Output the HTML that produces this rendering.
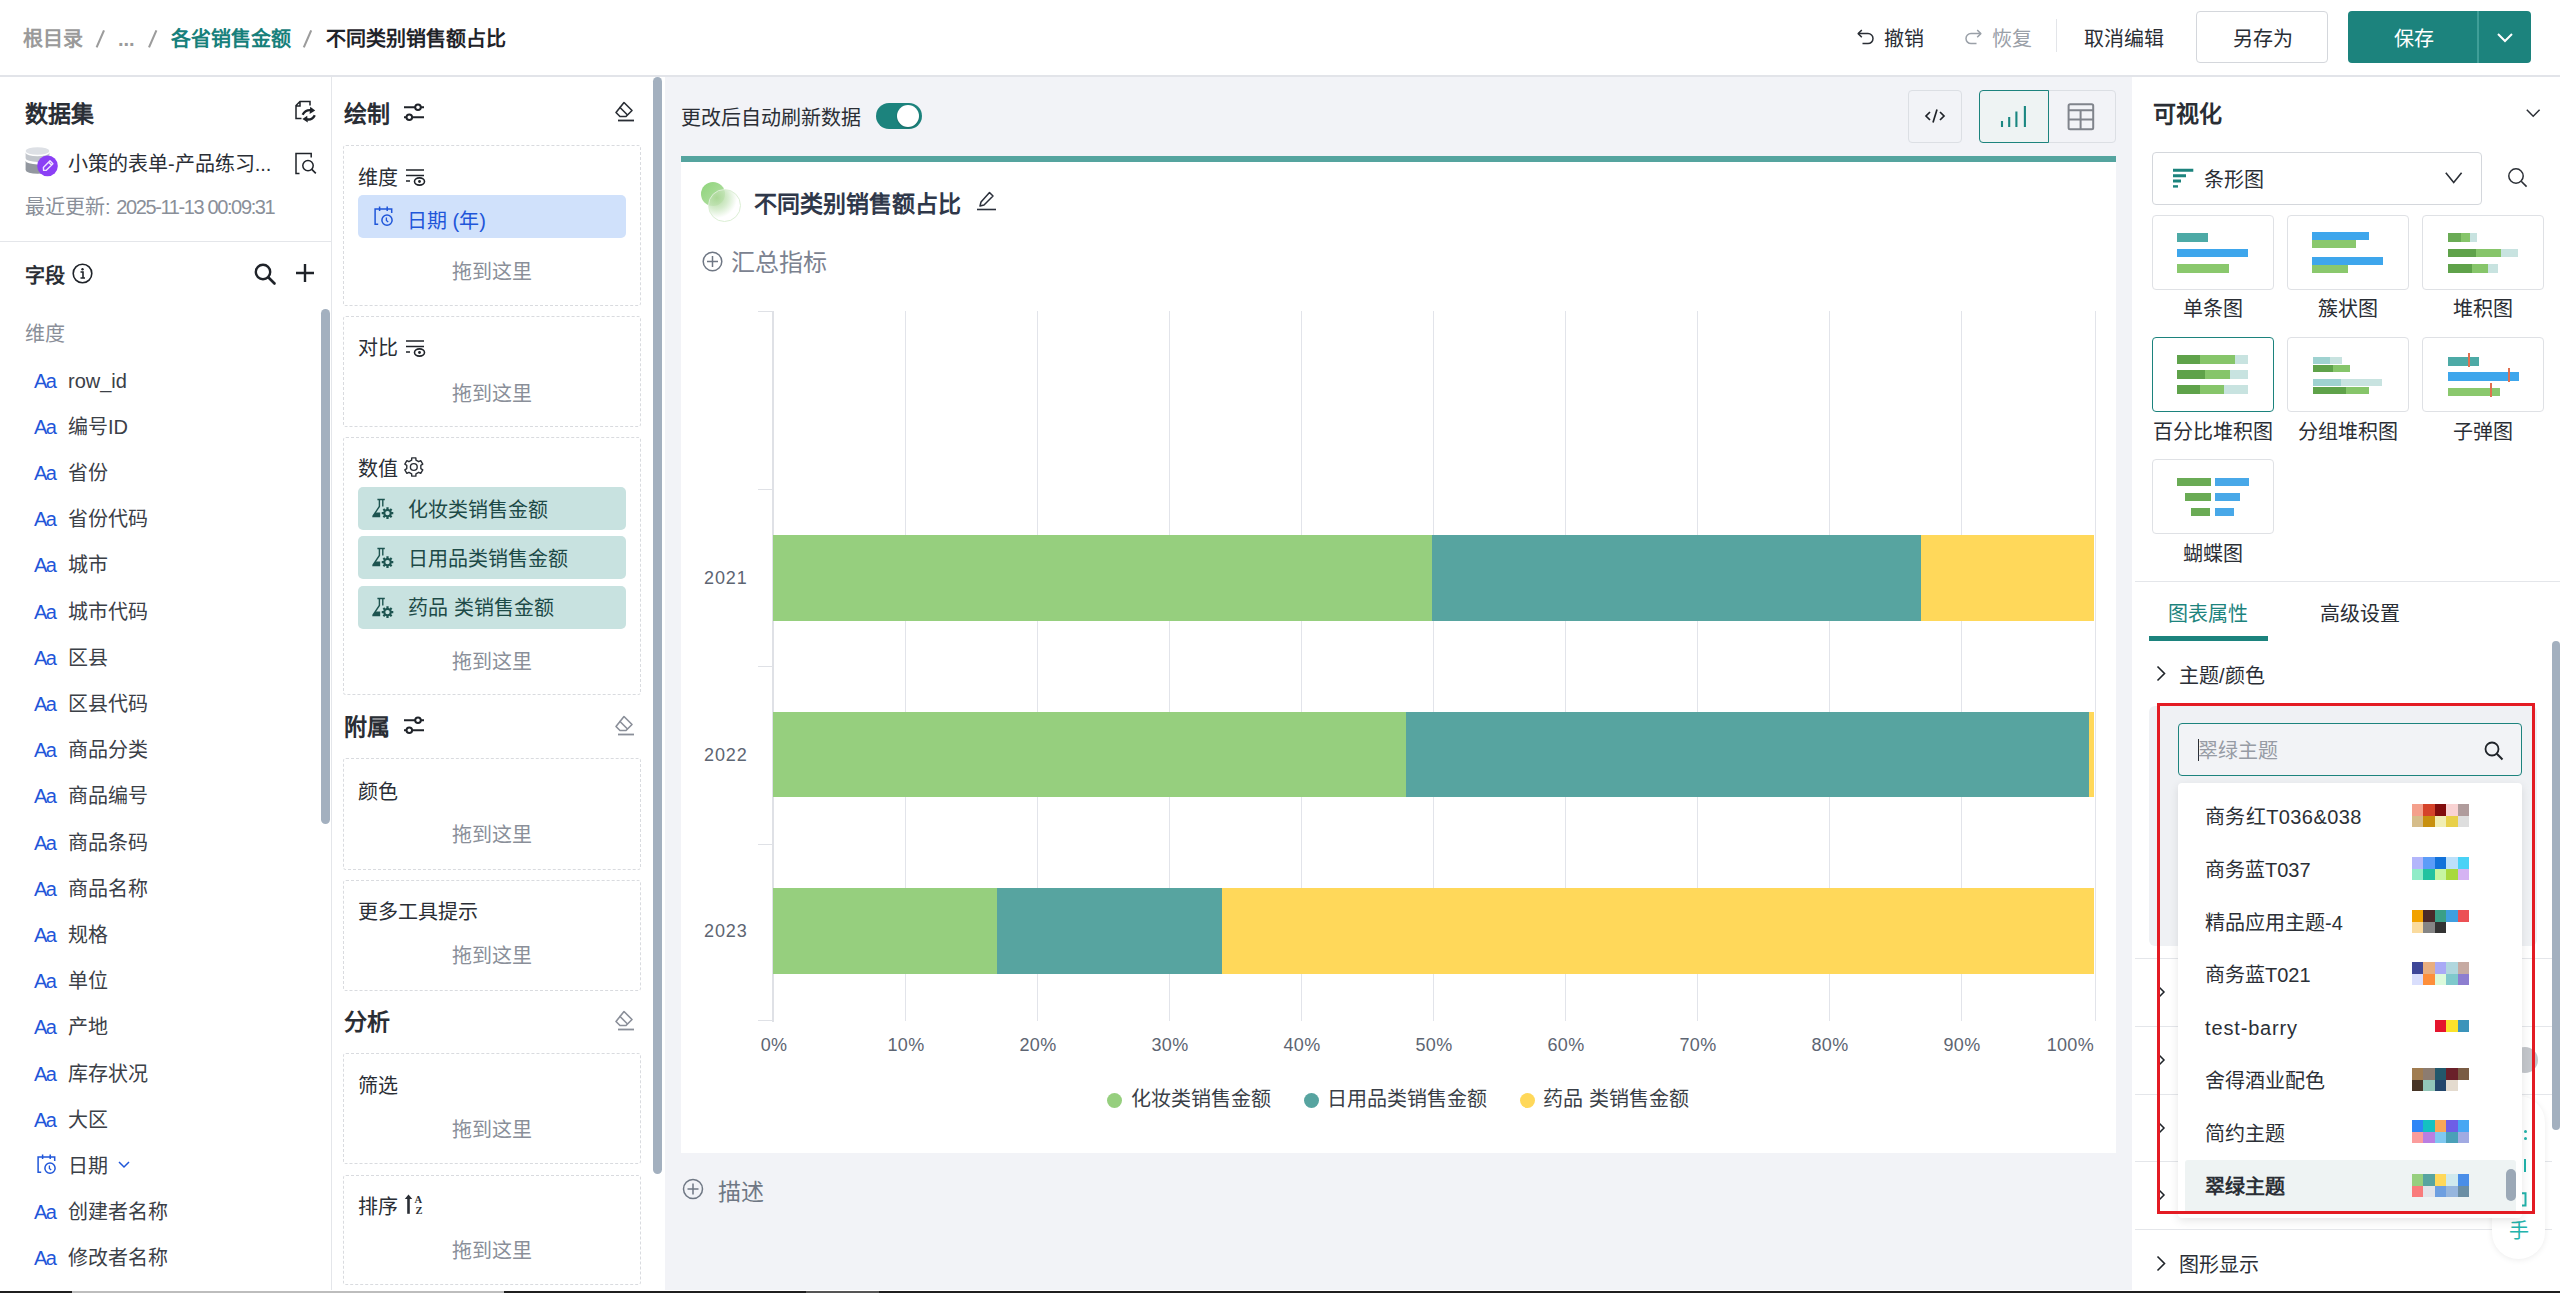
<!DOCTYPE html>
<html lang="zh-CN">
<head>
<meta charset="utf-8">
<style>
*{box-sizing:border-box;margin:0;padding:0}
html,body{width:2560px;height:1293px;overflow:hidden;background:#fff;font-family:"Liberation Sans",sans-serif;color:#1f2329}
.a{position:absolute}
.t{position:absolute;white-space:nowrap}
svg{position:absolute;overflow:visible}
.box{position:absolute;border:1px dashed #d9dbdf;border-radius:3px;background:#fff}
</style>
</head>
<body>

<div class="a" style="left:0px;top:0px;width:2560px;height:77px;background:#fff;border-bottom:2px solid #e2e4e9"></div>
<div class="t" style="left:23px;top:24.0px;font-size:20px;line-height:30.0px;color:#9a9a9a;font-weight:600;">根目录</div>
<svg style="left:80px;top:20px" width="260" height="40" viewBox="0 0 260 40"><path d="M16.6 27.3 L24 10.4 M69 27.3 L76.4 10.4 M223.8 27.3 L231.2 10.4" stroke="#9c9c9c" stroke-width="2.1"/></svg>
<div class="t" style="left:118px;top:24.0px;font-size:20px;line-height:30.0px;color:#9a9a9a;font-weight:600;">...</div>
<div class="t" style="left:171px;top:24.0px;font-size:20px;line-height:30.0px;color:#17807b;font-weight:600;">各省销售金额</div>
<div class="t" style="left:326px;top:24.0px;font-size:20px;line-height:30.0px;color:#1f2329;font-weight:600;">不同类别销售额占比</div>
<svg style="left:1857px;top:29px" width="18" height="17" viewBox="0 0 18 17"><path d="M4.8 1 L1.2 4.6 L4.8 8.2" fill="none" stroke="#2b2f36" stroke-width="1.5" stroke-linejoin="round"/><path d="M1.5 4.6 H11 a5 5 0 0 1 0 10 H5.5" fill="none" stroke="#2b2f36" stroke-width="1.5"/></svg>
<div class="t" style="left:1884px;top:24.0px;font-size:20px;line-height:30.0px;color:#2a2e35;">撤销</div>
<svg style="left:1964px;top:29px" width="18" height="17" viewBox="0 0 18 17"><path d="M13.2 1 L16.8 4.6 L13.2 8.2" fill="none" stroke="#9aa0a8" stroke-width="1.5" stroke-linejoin="round"/><path d="M16.5 4.6 H7 a5 5 0 0 0 0 10 H12.5" fill="none" stroke="#9aa0a8" stroke-width="1.5"/></svg>
<div class="t" style="left:1992px;top:24.0px;font-size:20px;line-height:30.0px;color:#9aa0a8;">恢复</div>
<div class="a" style="left:2056px;top:19px;width:1px;height:33px;background:#e3e5e9;"></div>
<div class="t" style="left:2084px;top:24.0px;font-size:20px;line-height:30.0px;color:#2a2e35;">取消编辑</div>
<div class="a" style="left:2196px;top:11px;width:132px;height:52px;background:#fff;border:1px solid #d4d7dc;border-radius:4px"></div>
<div class="t" style="left:2233px;top:24.0px;font-size:20px;line-height:30.0px;color:#2a2e35;">另存为</div>
<div class="a" style="left:2348px;top:11px;width:183px;height:52px;background:#1c837d;border-radius:4px"></div>
<div class="a" style="left:2477px;top:11px;width:2px;height:52px;background:#3f9e98;"></div>
<div class="t" style="left:2394px;top:24.0px;font-size:20px;line-height:30.0px;color:#fff;">保存</div>
<svg style="left:2497px;top:33px" width="16" height="10" viewBox="0 0 16 10"><path d="M1 1 L8 8 L15 1" fill="none" stroke="#fff" stroke-width="2"/></svg>
<div class="a" style="left:331px;top:77px;width:1px;height:1213px;background:#e4e6ea;"></div>
<div class="t" style="left:25px;top:97.4px;font-size:23px;line-height:34.5px;color:#2a2e35;font-weight:700;">数据集</div>
<svg style="left:285px;top:95px" width="40" height="85" viewBox="0 0 40 85"><path d="M25 10.5 V6.5 H15 L11 10.5 V23.5 H16.5 M15 6.5 V11 H11" fill="none" stroke="#1f2329" stroke-width="1.5"/><path d="M17.6 19.8 Q20.5 14.3 26.5 15.2" fill="none" stroke="#1f2329" stroke-width="2.3"/><path d="M25.2 11.8 L30.2 15.6 L24.6 18.9 Z" fill="#1f2329"/><path d="M29.8 20.2 Q27.2 25.6 20.8 24.2" fill="none" stroke="#1f2329" stroke-width="2.3"/><path d="M22.2 20.8 L17.4 24 L22.8 27.6 Z" fill="#1f2329"/><path d="M14.5 78.5 H11 V58.6 H26.2 V62.5" fill="none" stroke="#1f2329" stroke-width="1.5"/><circle cx="23" cy="70.6" r="5.2" fill="none" stroke="#1f2329" stroke-width="1.5"/><path d="M26.8 74.4 L30.8 78.4" stroke="#1f2329" stroke-width="1.6"/></svg>
<svg style="left:20px;top:140px" width="40" height="40" viewBox="0 0 40 40"><ellipse cx="17.5" cy="11" rx="11.9" ry="3.75" fill="#dde0e5"/><path d="M5.6 12.6 A11.9 3.75 0 0 0 29.4 12.6 V18.2 A11.9 3.75 0 0 1 5.6 18.2 Z" fill="#c2c6cc"/><path d="M5.6 20.7 A11.9 3.75 0 0 0 29.4 20.7 V30 A11.9 3.75 0 0 1 5.6 30 Z" fill="#92979f"/><circle cx="27.5" cy="25.9" r="10.3" fill="#8b3ff5"/><path d="M23.6 30.4 L23.4 27.4 L30 20.8 L32.9 23.7 L26.3 30.3 Z M28.6 22.2 L31.5 25.1" fill="none" stroke="#efe4ff" stroke-width="1.4" stroke-linejoin="round"/></svg>
<div class="t" style="left:68px;top:149.0px;font-size:20px;line-height:30.0px;color:#2a2e35;">小策的表单-产品练习...</div>
<div class="t" style="left:25px;top:192px;font-size:20px;line-height:30px;color:#8a8f99">最近更新: <span style="display:inline-block;letter-spacing:-1.37px">2025-11-13 00:09:31</span></div>
<div class="a" style="left:0px;top:241px;width:331px;height:1px;background:#e4e6ea;"></div>
<div class="t" style="left:25px;top:261.0px;font-size:20px;line-height:30.0px;color:#2a2e35;font-weight:700;">字段</div>
<svg style="left:72px;top:263px" width="21" height="21" viewBox="0 0 21 21"><circle cx="10.5" cy="10.5" r="9.3" fill="none" stroke="#1f2329" stroke-width="1.6"/><circle cx="10.5" cy="6.3" r="1.2" fill="#1f2329"/><path d="M8.5 9 H11 V15 M8.5 15 H13" fill="none" stroke="#1f2329" stroke-width="1.6"/></svg>
<svg style="left:254px;top:263px" width="22" height="22" viewBox="0 0 22 22"><circle cx="9" cy="9" r="7.2" fill="none" stroke="#1f2329" stroke-width="2.4"/><path d="M14.5 14.5 L20.5 20.5" stroke="#1f2329" stroke-width="2.6" stroke-linecap="round"/></svg>
<svg style="left:295px;top:263px" width="20" height="20" viewBox="0 0 20 20"><path d="M10 1 V19 M1 10 H19" stroke="#1f2329" stroke-width="2.4"/></svg>
<div class="t" style="left:25px;top:318.5px;font-size:20px;line-height:30.0px;color:#8a8f99;">维度</div>
<div class="a" style="left:321px;top:309px;width:9px;height:515px;background:#a3b0bf;border-radius:4.5px"></div>
<div class="t" style="left:34px;top:365.5px;font-size:20px;line-height:30.0px;color:#1f56d9;letter-spacing:-1.5px">Aa</div>
<div class="t" style="left:68px;top:365.5px;font-size:20px;line-height:30.0px;color:#3b4047;">row_id</div>
<div class="t" style="left:34px;top:411.7px;font-size:20px;line-height:30.0px;color:#1f56d9;letter-spacing:-1.5px">Aa</div>
<div class="t" style="left:68px;top:411.7px;font-size:20px;line-height:30.0px;color:#3b4047;">编号ID</div>
<div class="t" style="left:34px;top:457.9px;font-size:20px;line-height:30.0px;color:#1f56d9;letter-spacing:-1.5px">Aa</div>
<div class="t" style="left:68px;top:457.9px;font-size:20px;line-height:30.0px;color:#3b4047;">省份</div>
<div class="t" style="left:34px;top:504.1px;font-size:20px;line-height:30.0px;color:#1f56d9;letter-spacing:-1.5px">Aa</div>
<div class="t" style="left:68px;top:504.1px;font-size:20px;line-height:30.0px;color:#3b4047;">省份代码</div>
<div class="t" style="left:34px;top:550.3px;font-size:20px;line-height:30.0px;color:#1f56d9;letter-spacing:-1.5px">Aa</div>
<div class="t" style="left:68px;top:550.3px;font-size:20px;line-height:30.0px;color:#3b4047;">城市</div>
<div class="t" style="left:34px;top:596.5px;font-size:20px;line-height:30.0px;color:#1f56d9;letter-spacing:-1.5px">Aa</div>
<div class="t" style="left:68px;top:596.5px;font-size:20px;line-height:30.0px;color:#3b4047;">城市代码</div>
<div class="t" style="left:34px;top:642.7px;font-size:20px;line-height:30.0px;color:#1f56d9;letter-spacing:-1.5px">Aa</div>
<div class="t" style="left:68px;top:642.7px;font-size:20px;line-height:30.0px;color:#3b4047;">区县</div>
<div class="t" style="left:34px;top:688.9px;font-size:20px;line-height:30.0px;color:#1f56d9;letter-spacing:-1.5px">Aa</div>
<div class="t" style="left:68px;top:688.9px;font-size:20px;line-height:30.0px;color:#3b4047;">区县代码</div>
<div class="t" style="left:34px;top:735.1px;font-size:20px;line-height:30.0px;color:#1f56d9;letter-spacing:-1.5px">Aa</div>
<div class="t" style="left:68px;top:735.1px;font-size:20px;line-height:30.0px;color:#3b4047;">商品分类</div>
<div class="t" style="left:34px;top:781.3px;font-size:20px;line-height:30.0px;color:#1f56d9;letter-spacing:-1.5px">Aa</div>
<div class="t" style="left:68px;top:781.3px;font-size:20px;line-height:30.0px;color:#3b4047;">商品编号</div>
<div class="t" style="left:34px;top:827.5px;font-size:20px;line-height:30.0px;color:#1f56d9;letter-spacing:-1.5px">Aa</div>
<div class="t" style="left:68px;top:827.5px;font-size:20px;line-height:30.0px;color:#3b4047;">商品条码</div>
<div class="t" style="left:34px;top:873.7px;font-size:20px;line-height:30.0px;color:#1f56d9;letter-spacing:-1.5px">Aa</div>
<div class="t" style="left:68px;top:873.7px;font-size:20px;line-height:30.0px;color:#3b4047;">商品名称</div>
<div class="t" style="left:34px;top:919.9px;font-size:20px;line-height:30.0px;color:#1f56d9;letter-spacing:-1.5px">Aa</div>
<div class="t" style="left:68px;top:919.9px;font-size:20px;line-height:30.0px;color:#3b4047;">规格</div>
<div class="t" style="left:34px;top:966.1px;font-size:20px;line-height:30.0px;color:#1f56d9;letter-spacing:-1.5px">Aa</div>
<div class="t" style="left:68px;top:966.1px;font-size:20px;line-height:30.0px;color:#3b4047;">单位</div>
<div class="t" style="left:34px;top:1012.3px;font-size:20px;line-height:30.0px;color:#1f56d9;letter-spacing:-1.5px">Aa</div>
<div class="t" style="left:68px;top:1012.3px;font-size:20px;line-height:30.0px;color:#3b4047;">产地</div>
<div class="t" style="left:34px;top:1058.5px;font-size:20px;line-height:30.0px;color:#1f56d9;letter-spacing:-1.5px">Aa</div>
<div class="t" style="left:68px;top:1058.5px;font-size:20px;line-height:30.0px;color:#3b4047;">库存状况</div>
<div class="t" style="left:34px;top:1104.7px;font-size:20px;line-height:30.0px;color:#1f56d9;letter-spacing:-1.5px">Aa</div>
<div class="t" style="left:68px;top:1104.7px;font-size:20px;line-height:30.0px;color:#3b4047;">大区</div>
<svg style="left:37px;top:1154px" width="20" height="20" viewBox="0 0 20 20"><path d="M5.6 0.6 V5 M13.2 0.6 V5" stroke="#1f56d9" stroke-width="1.5"/><path d="M4.2 18.2 H1.1 V3.1 H17.7 V7" fill="none" stroke="#1f56d9" stroke-width="1.5"/><circle cx="13" cy="14.2" r="5.1" fill="none" stroke="#1f56d9" stroke-width="1.5"/><path d="M12.4 11.6 V14.5 L14.2 16" fill="none" stroke="#1f56d9" stroke-width="1.3"/></svg>
<div class="t" style="left:68px;top:1150.9px;font-size:20px;line-height:30.0px;color:#3b4047;">日期</div>
<svg style="left:118px;top:1161px" width="12" height="7" viewBox="0 0 12 7"><path d="M1 1 L6 6 L11 1" fill="none" stroke="#1f56d9" stroke-width="1.5"/></svg>
<div class="t" style="left:34px;top:1197.1px;font-size:20px;line-height:30.0px;color:#1f56d9;letter-spacing:-1.5px">Aa</div>
<div class="t" style="left:68px;top:1197.1px;font-size:20px;line-height:30.0px;color:#3b4047;">创建者名称</div>
<div class="t" style="left:34px;top:1243.3px;font-size:20px;line-height:30.0px;color:#1f56d9;letter-spacing:-1.5px">Aa</div>
<div class="t" style="left:68px;top:1243.3px;font-size:20px;line-height:30.0px;color:#3b4047;">修改者名称</div>
<div class="a" style="left:653px;top:77px;width:9px;height:1097px;background:#a3b0bf;border-radius:4.5px"></div>
<div class="t" style="left:344px;top:96.9px;font-size:23px;line-height:34.5px;color:#2a2e35;font-weight:700;">绘制</div>
<svg style="left:403px;top:104px" width="22" height="17" viewBox="0 0 22 17"><path d="M1 3.2 H12 M18 3.2 H21 M1 13.2 H3 M9.5 13.2 H21" stroke="#1f2329" stroke-width="2"/><circle cx="15" cy="3.2" r="2.8" fill="none" stroke="#1f2329" stroke-width="2"/><circle cx="6.3" cy="13.2" r="2.8" fill="none" stroke="#1f2329" stroke-width="2"/></svg>
<svg style="left:614px;top:101px" width="21" height="21" viewBox="0 0 21 21"><path d="M10 1.5 L18 9.5 L12 15.5 H6 L2 11.5 Z" fill="none" stroke="#2a2e35" stroke-width="1.6" stroke-linejoin="round"/><path d="M5.5 6 L13.5 14" stroke="#2a2e35" stroke-width="1.6"/><path d="M4 19.5 H20" stroke="#2a2e35" stroke-width="1.8"/></svg>
<div class="box" style="left:343px;top:145px;width:298px;height:161px"></div>
<div class="t" style="left:358px;top:162.5px;font-size:20px;line-height:30.0px;color:#2a2e35;">维度</div>
<svg style="left:405px;top:168px" width="19" height="18" viewBox="0 0 19 18"><path d="M1 2 H19 M1 7.5 H19 M1 13 H4 M1 13 H5" stroke="#1f2329" stroke-width="1.6"/><ellipse cx="14.5" cy="13.5" rx="5" ry="3.6" fill="none" stroke="#1f2329" stroke-width="1.6"/><circle cx="14.5" cy="13.5" r="1.4" fill="#1f2329"/></svg>
<div class="a" style="left:358px;top:195px;width:268px;height:43px;background:#d0e1fb;border-radius:5px"></div>
<svg style="left:374px;top:206px" width="20" height="20" viewBox="0 0 20 20"><path d="M5.6 0.6 V5 M13.2 0.6 V5" stroke="#1f56d9" stroke-width="1.5"/><path d="M4.2 18.2 H1.1 V3.1 H17.7 V7" fill="none" stroke="#1f56d9" stroke-width="1.5"/><circle cx="13" cy="14.2" r="5.1" fill="none" stroke="#1f56d9" stroke-width="1.5"/><path d="M12.4 11.6 V14.5 L14.2 16" fill="none" stroke="#1f56d9" stroke-width="1.3"/></svg>
<div class="t" style="left:407px;top:205.5px;font-size:20px;line-height:30.0px;color:#1f56d9;">日期 (年)</div>
<div class="t" style="left:292px;width:400px;text-align:center;top:256.5px;font-size:20px;line-height:30.0px;color:#8a8f99;">拖到这里</div>
<div class="box" style="left:343px;top:316px;width:298px;height:111px"></div>
<div class="t" style="left:358px;top:333.0px;font-size:20px;line-height:30.0px;color:#2a2e35;">对比</div>
<svg style="left:405px;top:339px" width="19" height="18" viewBox="0 0 19 18"><path d="M1 2 H19 M1 7.5 H19 M1 13 H4 M1 13 H5" stroke="#1f2329" stroke-width="1.6"/><ellipse cx="14.5" cy="13.5" rx="5" ry="3.6" fill="none" stroke="#1f2329" stroke-width="1.6"/><circle cx="14.5" cy="13.5" r="1.4" fill="#1f2329"/></svg>
<div class="t" style="left:292px;width:400px;text-align:center;top:378.5px;font-size:20px;line-height:30.0px;color:#8a8f99;">拖到这里</div>
<div class="box" style="left:343px;top:437px;width:298px;height:258px"></div>
<div class="t" style="left:358px;top:454.0px;font-size:20px;line-height:30.0px;color:#2a2e35;">数值</div>
<svg style="left:400px;top:452px" width="30" height="30" viewBox="0 0 30 30"><path d="M11.65 8.13 L11.75 5.83 L15.85 5.83 L15.95 8.13 L18.67 9.70 L20.72 8.64 L22.77 12.19 L20.83 13.43 L20.83 16.57 L22.77 17.81 L20.72 21.36 L18.67 20.30 L15.95 21.87 L15.85 24.17 L11.75 24.17 L11.65 21.87 L8.93 20.30 L6.88 21.36 L4.83 17.81 L6.77 16.57 L6.77 13.43 L4.83 12.19 L6.88 8.64 L8.93 9.70 Z" fill="none" stroke="#2b2f36" stroke-width="1.4" stroke-linejoin="round"/><circle cx="13.8" cy="15" r="3.4" fill="none" stroke="#2b2f36" stroke-width="1.4"/></svg>
<div class="a" style="left:358px;top:487px;width:268px;height:43px;background:#c8e2e0;border-radius:5px"></div>
<svg style="left:370px;top:497px" width="25" height="25" viewBox="0 0 25 25"><path d="M7.4 2.5 H14.8 M12.8 2.5 V9.5" fill="none" stroke="#1d5450" stroke-width="1.4"/><path d="M9.4 2.5 V9.5 L2.6 19.6" fill="none" stroke="#1d5450" stroke-width="1.4"/><path d="M5.2 15.5 L2.2 20.2 H10.2 V15.5 Z" fill="#1d5450"/><path fill-rule="evenodd" d="M16.40 11.94 L16.35 10.31 L18.65 10.31 L18.60 11.94 L19.66 12.38 L20.78 11.19 L22.41 12.82 L21.22 13.94 L21.66 15.00 L23.29 14.95 L23.29 17.25 L21.66 17.20 L21.22 18.26 L22.41 19.38 L20.78 21.01 L19.66 19.82 L18.60 20.26 L18.65 21.89 L16.35 21.89 L16.40 20.26 L15.34 19.82 L14.22 21.01 L12.59 19.38 L13.78 18.26 L13.34 17.20 L11.71 17.25 L11.71 14.95 L13.34 15.00 L13.78 13.94 L12.59 12.82 L14.22 11.19 L15.34 12.38 Z M19.7 16.1 A2.2 2.2 0 1 0 15.3 16.1 A2.2 2.2 0 1 0 19.7 16.1 Z" fill="#1d5450"/></svg>
<div class="t" style="left:408px;top:494.5px;font-size:20px;line-height:30.0px;color:#1d4a47;">化妆类销售金额</div>
<div class="a" style="left:358px;top:536px;width:268px;height:43px;background:#c8e2e0;border-radius:5px"></div>
<svg style="left:370px;top:546px" width="25" height="25" viewBox="0 0 25 25"><path d="M7.4 2.5 H14.8 M12.8 2.5 V9.5" fill="none" stroke="#1d5450" stroke-width="1.4"/><path d="M9.4 2.5 V9.5 L2.6 19.6" fill="none" stroke="#1d5450" stroke-width="1.4"/><path d="M5.2 15.5 L2.2 20.2 H10.2 V15.5 Z" fill="#1d5450"/><path fill-rule="evenodd" d="M16.40 11.94 L16.35 10.31 L18.65 10.31 L18.60 11.94 L19.66 12.38 L20.78 11.19 L22.41 12.82 L21.22 13.94 L21.66 15.00 L23.29 14.95 L23.29 17.25 L21.66 17.20 L21.22 18.26 L22.41 19.38 L20.78 21.01 L19.66 19.82 L18.60 20.26 L18.65 21.89 L16.35 21.89 L16.40 20.26 L15.34 19.82 L14.22 21.01 L12.59 19.38 L13.78 18.26 L13.34 17.20 L11.71 17.25 L11.71 14.95 L13.34 15.00 L13.78 13.94 L12.59 12.82 L14.22 11.19 L15.34 12.38 Z M19.7 16.1 A2.2 2.2 0 1 0 15.3 16.1 A2.2 2.2 0 1 0 19.7 16.1 Z" fill="#1d5450"/></svg>
<div class="t" style="left:408px;top:543.5px;font-size:20px;line-height:30.0px;color:#1d4a47;">日用品类销售金额</div>
<div class="a" style="left:358px;top:585.5px;width:268px;height:43px;background:#c8e2e0;border-radius:5px"></div>
<svg style="left:370px;top:595.5px" width="25" height="25" viewBox="0 0 25 25"><path d="M7.4 2.5 H14.8 M12.8 2.5 V9.5" fill="none" stroke="#1d5450" stroke-width="1.4"/><path d="M9.4 2.5 V9.5 L2.6 19.6" fill="none" stroke="#1d5450" stroke-width="1.4"/><path d="M5.2 15.5 L2.2 20.2 H10.2 V15.5 Z" fill="#1d5450"/><path fill-rule="evenodd" d="M16.40 11.94 L16.35 10.31 L18.65 10.31 L18.60 11.94 L19.66 12.38 L20.78 11.19 L22.41 12.82 L21.22 13.94 L21.66 15.00 L23.29 14.95 L23.29 17.25 L21.66 17.20 L21.22 18.26 L22.41 19.38 L20.78 21.01 L19.66 19.82 L18.60 20.26 L18.65 21.89 L16.35 21.89 L16.40 20.26 L15.34 19.82 L14.22 21.01 L12.59 19.38 L13.78 18.26 L13.34 17.20 L11.71 17.25 L11.71 14.95 L13.34 15.00 L13.78 13.94 L12.59 12.82 L14.22 11.19 L15.34 12.38 Z M19.7 16.1 A2.2 2.2 0 1 0 15.3 16.1 A2.2 2.2 0 1 0 19.7 16.1 Z" fill="#1d5450"/></svg>
<div class="t" style="left:408px;top:593.0px;font-size:20px;line-height:30.0px;color:#1d4a47;">药品 类销售金额</div>
<div class="t" style="left:292px;width:400px;text-align:center;top:646.5px;font-size:20px;line-height:30.0px;color:#8a8f99;">拖到这里</div>
<div class="t" style="left:344px;top:709.7px;font-size:23px;line-height:34.5px;color:#2a2e35;font-weight:700;">附属</div>
<svg style="left:403px;top:717px" width="22" height="17" viewBox="0 0 22 17"><path d="M1 3.2 H12 M18 3.2 H21 M1 13.2 H3 M9.5 13.2 H21" stroke="#1f2329" stroke-width="2"/><circle cx="15" cy="3.2" r="2.8" fill="none" stroke="#1f2329" stroke-width="2"/><circle cx="6.3" cy="13.2" r="2.8" fill="none" stroke="#1f2329" stroke-width="2"/></svg>
<svg style="left:614px;top:714.6px" width="21" height="21" viewBox="0 0 21 21"><path d="M10 1.5 L18 9.5 L12 15.5 H6 L2 11.5 Z" fill="none" stroke="#8a8f99" stroke-width="1.6" stroke-linejoin="round"/><path d="M5.5 6 L13.5 14" stroke="#8a8f99" stroke-width="1.6"/><path d="M4 19.5 H20" stroke="#8a8f99" stroke-width="1.8"/></svg>
<div class="box" style="left:343px;top:758px;width:298px;height:112px"></div>
<div class="t" style="left:358px;top:776.5px;font-size:20px;line-height:30.0px;color:#2a2e35;">颜色</div>
<div class="t" style="left:292px;width:400px;text-align:center;top:820.0px;font-size:20px;line-height:30.0px;color:#8a8f99;">拖到这里</div>
<div class="box" style="left:343px;top:880px;width:298px;height:111px"></div>
<div class="t" style="left:358px;top:897.0px;font-size:20px;line-height:30.0px;color:#2a2e35;">更多工具提示</div>
<div class="t" style="left:292px;width:400px;text-align:center;top:941.0px;font-size:20px;line-height:30.0px;color:#8a8f99;">拖到这里</div>
<div class="t" style="left:344px;top:1005.4px;font-size:23px;line-height:34.5px;color:#2a2e35;font-weight:700;">分析</div>
<svg style="left:614px;top:1009.6px" width="21" height="21" viewBox="0 0 21 21"><path d="M10 1.5 L18 9.5 L12 15.5 H6 L2 11.5 Z" fill="none" stroke="#8a8f99" stroke-width="1.6" stroke-linejoin="round"/><path d="M5.5 6 L13.5 14" stroke="#8a8f99" stroke-width="1.6"/><path d="M4 19.5 H20" stroke="#8a8f99" stroke-width="1.8"/></svg>
<div class="box" style="left:343px;top:1053px;width:298px;height:111px"></div>
<div class="t" style="left:358px;top:1070.5px;font-size:20px;line-height:30.0px;color:#2a2e35;">筛选</div>
<div class="t" style="left:292px;width:400px;text-align:center;top:1114.5px;font-size:20px;line-height:30.0px;color:#8a8f99;">拖到这里</div>
<div class="box" style="left:343px;top:1175px;width:298px;height:110px"></div>
<div class="t" style="left:358px;top:1191.5px;font-size:20px;line-height:30.0px;color:#2a2e35;">排序</div>
<svg style="left:400px;top:1190px" width="30" height="30" viewBox="0 0 30 30"><path d="M8.5 7.5 V23.8" stroke="#2a2e35" stroke-width="2.6"/><path d="M4.8 9 L8.5 4.6 L12.3 9 Z" fill="#2a2e35"/><text x="14.6" y="12.9" font-size="10.5" font-weight="bold" font-family="Liberation Serif" fill="#2a2e35">A</text><text x="15.4" y="23.9" font-size="10.5" font-weight="bold" font-family="Liberation Serif" fill="#2a2e35">Z</text></svg>
<div class="t" style="left:292px;width:400px;text-align:center;top:1236.0px;font-size:20px;line-height:30.0px;color:#8a8f99;">拖到这里</div>
<div class="a" style="left:665px;top:77px;width:1467px;height:1213px;background:#f2f3f7;"></div>
<div class="t" style="left:681px;top:102.5px;font-size:20px;line-height:30.0px;color:#2a2e35;">更改后自动刷新数据</div>
<div class="a" style="left:876px;top:103px;width:46px;height:26px;background:#1c837d;border-radius:13px"></div>
<div class="a" style="left:897px;top:105px;width:22px;height:22px;border-radius:11px;background:#fff;box-shadow:0 1px 2px rgba(0,0,0,.2)"></div>
<div class="a" style="left:1908px;top:90px;width:54px;height:53px;background:#f2f3f7;border:1px solid #dcdfe4;border-radius:4px"></div>
<svg style="left:1925px;top:107px" width="20" height="18" viewBox="0 0 20 18"><path d="M5 5 L1 9 L5 13 M15 5 L19 9 L15 13 M12 2.5 L8 15.5" fill="none" stroke="#1f2329" stroke-width="1.7"/></svg>
<div class="a" style="left:1979px;top:90px;width:137px;height:53px;background:#f2f3f7;border:1px solid #dcdfe4;border-radius:4px"></div>
<div class="a" style="left:1979px;top:90px;width:70px;height:53px;background:#eef3f3;border:1.5px solid #1c837d;border-radius:4px 0 0 4px"></div>
<svg style="left:1995px;top:100px" width="36" height="30" viewBox="0 0 36 30"><path d="M7 27 V21 M14.2 27 V17 M21.4 27 V11.5 M29.9 27 V6" stroke="#1a8781" stroke-width="2.1"/></svg>
<svg style="left:2067px;top:103px" width="28" height="28" viewBox="0 0 28 28"><rect x="1.6" y="1.2" width="24.6" height="25" rx="1.5" fill="none" stroke="#80848c" stroke-width="2"/><path d="M1.6 7.2 H26.2 M1.6 16.6 H26.2 M13.6 7.2 V26.2" stroke="#80848c" stroke-width="2"/></svg>
<div class="a" style="left:681px;top:156px;width:1435px;height:6px;background:#55a49f;"></div>
<div class="a" style="left:681px;top:162px;width:1435px;height:991px;background:#fff;"></div>
<div class="a" style="left:701px;top:182px;width:24px;height:24px;border-radius:50%;background:linear-gradient(135deg,#8ed47a,#b9e0ab)"></div>
<div class="a" style="left:707.5px;top:188.5px;width:33px;height:33px;border-radius:50%;background:radial-gradient(circle at 25% 25%,rgba(170,215,150,0.95),rgba(205,232,195,0.8) 35%,rgba(255,255,255,0.97) 62%);border:1.2px solid #dcefd5"></div>
<div class="t" style="left:754px;top:187.4px;font-size:23px;line-height:34.5px;color:#2f384a;font-weight:700;">不同类别销售额占比</div>
<svg style="left:976px;top:191px" width="22" height="20" viewBox="0 0 22 20"><path d="M13.5 1.5 L17 5 L8 14 L4 15 L5 11 Z" fill="none" stroke="#2b303b" stroke-width="1.5" stroke-linejoin="round"/><path d="M1 18.5 H20" stroke="#2b303b" stroke-width="1.6"/></svg>
<svg style="left:702px;top:251px" width="21" height="21" viewBox="0 0 21 21"><circle cx="10.5" cy="10.5" r="9.3" fill="none" stroke="#6f7784" stroke-width="1.5"/><path d="M10.5 5 V16 M5 10.5 H16" stroke="#6f7784" stroke-width="1.5"/></svg>
<div class="t" style="left:731px;top:245.2px;font-size:24px;line-height:36.0px;color:#7b8290;">汇总指标</div>
<div class="a" style="left:905px;top:311px;width:1px;height:710px;background:#e2e4ea;"></div>
<div class="a" style="left:1037px;top:311px;width:1px;height:710px;background:#e2e4ea;"></div>
<div class="a" style="left:1169px;top:311px;width:1px;height:710px;background:#e2e4ea;"></div>
<div class="a" style="left:1301px;top:311px;width:1px;height:710px;background:#e2e4ea;"></div>
<div class="a" style="left:1433px;top:311px;width:1px;height:710px;background:#e2e4ea;"></div>
<div class="a" style="left:1565px;top:311px;width:1px;height:710px;background:#e2e4ea;"></div>
<div class="a" style="left:1697px;top:311px;width:1px;height:710px;background:#e2e4ea;"></div>
<div class="a" style="left:1829px;top:311px;width:1px;height:710px;background:#e2e4ea;"></div>
<div class="a" style="left:1961px;top:311px;width:1px;height:710px;background:#e2e4ea;"></div>
<div class="a" style="left:2095px;top:311px;width:1px;height:710px;background:#e2e4ea;"></div>
<div class="a" style="left:772px;top:311px;width:2px;height:711px;background:#dfe1e6;"></div>
<div class="a" style="left:758px;top:311px;width:15px;height:1px;background:#dfe1e6;"></div>
<div class="a" style="left:758px;top:489px;width:15px;height:1px;background:#dfe1e6;"></div>
<div class="a" style="left:758px;top:666px;width:15px;height:1px;background:#dfe1e6;"></div>
<div class="a" style="left:758px;top:844px;width:15px;height:1px;background:#dfe1e6;"></div>
<div class="a" style="left:758px;top:1020px;width:15px;height:1px;background:#dfe1e6;"></div>
<div class="a" style="left:773.0px;top:535px;width:659.2px;height:85.7px;background:#96cf7e;"></div>
<div class="a" style="left:1432.2px;top:535px;width:488.6px;height:85.7px;background:#57a4a0;"></div>
<div class="a" style="left:1920.8px;top:535px;width:173.7px;height:85.7px;background:#ffd85a;"></div>
<div class="a" style="left:773.0px;top:711.5px;width:633.0px;height:85.7px;background:#96cf7e;"></div>
<div class="a" style="left:1406.0px;top:711.5px;width:682.9px;height:85.7px;background:#57a4a0;"></div>
<div class="a" style="left:2088.9px;top:711.5px;width:5.6px;height:85.7px;background:#ffd85a;"></div>
<div class="a" style="left:773.0px;top:888px;width:223.7px;height:85.7px;background:#96cf7e;"></div>
<div class="a" style="left:996.7px;top:888px;width:225.7px;height:85.7px;background:#57a4a0;"></div>
<div class="a" style="left:1222.4px;top:888px;width:872.1px;height:85.7px;background:#ffd85a;"></div>
<div class="t" style="left:704px;top:565.4px;font-size:18px;line-height:27.0px;color:#5d6572;letter-spacing:0.9px">2021</div>
<div class="t" style="left:704px;top:741.9px;font-size:18px;line-height:27.0px;color:#5d6572;letter-spacing:0.9px">2022</div>
<div class="t" style="left:704px;top:918.4px;font-size:18px;line-height:27.0px;color:#5d6572;letter-spacing:0.9px">2023</div>
<div class="t" style="left:574px;width:400px;text-align:center;top:1031.9px;font-size:18px;line-height:27.0px;color:#5d6572;letter-spacing:0.3px">0%</div>
<div class="t" style="left:706px;width:400px;text-align:center;top:1031.9px;font-size:18px;line-height:27.0px;color:#5d6572;letter-spacing:0.3px">10%</div>
<div class="t" style="left:838px;width:400px;text-align:center;top:1031.9px;font-size:18px;line-height:27.0px;color:#5d6572;letter-spacing:0.3px">20%</div>
<div class="t" style="left:970px;width:400px;text-align:center;top:1031.9px;font-size:18px;line-height:27.0px;color:#5d6572;letter-spacing:0.3px">30%</div>
<div class="t" style="left:1102px;width:400px;text-align:center;top:1031.9px;font-size:18px;line-height:27.0px;color:#5d6572;letter-spacing:0.3px">40%</div>
<div class="t" style="left:1234px;width:400px;text-align:center;top:1031.9px;font-size:18px;line-height:27.0px;color:#5d6572;letter-spacing:0.3px">50%</div>
<div class="t" style="left:1366px;width:400px;text-align:center;top:1031.9px;font-size:18px;line-height:27.0px;color:#5d6572;letter-spacing:0.3px">60%</div>
<div class="t" style="left:1498px;width:400px;text-align:center;top:1031.9px;font-size:18px;line-height:27.0px;color:#5d6572;letter-spacing:0.3px">70%</div>
<div class="t" style="left:1630px;width:400px;text-align:center;top:1031.9px;font-size:18px;line-height:27.0px;color:#5d6572;letter-spacing:0.3px">80%</div>
<div class="t" style="left:1762px;width:400px;text-align:center;top:1031.9px;font-size:18px;line-height:27.0px;color:#5d6572;letter-spacing:0.3px">90%</div>
<div class="t" style="left:1894px;width:200px;text-align:right;top:1031.9px;font-size:18px;line-height:27px;color:#5d6572;letter-spacing:0.3px">100%</div>
<div class="a" style="left:1107px;top:1092.5px;width:15px;height:15px;border-radius:50%;background:#96cf7e"></div>
<div class="t" style="left:1131px;top:1084.3px;font-size:20px;line-height:30.0px;color:#3a3f47;">化妆类销售金额</div>
<div class="a" style="left:1304px;top:1092.5px;width:15px;height:15px;border-radius:50%;background:#57a4a0"></div>
<div class="t" style="left:1327px;top:1084.3px;font-size:20px;line-height:30.0px;color:#3a3f47;">日用品类销售金额</div>
<div class="a" style="left:1520px;top:1092.5px;width:15px;height:15px;border-radius:50%;background:#ffd85a"></div>
<div class="t" style="left:1543px;top:1084.3px;font-size:20px;line-height:30.0px;color:#3a3f47;">药品 类销售金额</div>
<svg style="left:682px;top:1178px" width="22" height="22" viewBox="0 0 22 22"><circle cx="11" cy="11" r="9.5" fill="none" stroke="#6f7784" stroke-width="1.5"/><path d="M11 5.5 V16.5 M5.5 11 H16.5" stroke="#6f7784" stroke-width="1.5"/></svg>
<div class="t" style="left:718px;top:1174.9px;font-size:23px;line-height:34.5px;color:#6f7784;">描述</div>
<div class="a" style="left:2132px;top:77px;width:428px;height:1213px;background:#fff;"></div>
<div class="t" style="left:2153px;top:96.9px;font-size:23px;line-height:34.5px;color:#2a2e35;font-weight:700;">可视化</div>
<svg style="left:2526px;top:108.5px" width="15" height="9" viewBox="0 0 15 9"><path d="M0.8 0.8 L7.2 7.2 L13.6 0.8" fill="none" stroke="#2b2f36" stroke-width="1.5"/></svg>
<div class="a" style="left:2152px;top:152px;width:330px;height:53px;background:#fff;border:1px solid #d4d7dc;border-radius:4px"></div>
<svg style="left:2172px;top:168px" width="22" height="22" viewBox="0 0 22 22"><path d="M1 2.3 H21.3 M1 7.8 H14 M1 13 H9" stroke="#1c837d" stroke-width="3"/><path d="M1 18.4 H6" stroke="#1c837d" stroke-width="2.4"/></svg>
<div class="t" style="left:2204px;top:164.5px;font-size:20px;line-height:30.0px;color:#2a2e35;">条形图</div>
<svg style="left:2445px;top:172px" width="18" height="12" viewBox="0 0 18 12"><path d="M0.8 0.8 L8.7 10.5 L16.6 0.8" fill="none" stroke="#2b2f36" stroke-width="1.6"/></svg>
<svg style="left:2507px;top:167px" width="22" height="22" viewBox="0 0 22 22"><circle cx="9" cy="9" r="7.2" fill="none" stroke="#2b2f36" stroke-width="1.5"/><path d="M14.2 14.2 L19.6 19.6" stroke="#2b2f36" stroke-width="1.6"/></svg>
<div class="a" style="left:2152px;top:215px;width:122px;height:75px;background:#fff;border:1px solid #dfe1e5;border-radius:4px"></div>
<div class="t" style="left:2013px;width:400px;text-align:center;top:294.0px;font-size:20px;line-height:30.0px;color:#2a2e35;">单条图</div>
<div class="a" style="left:2287px;top:215px;width:122px;height:75px;background:#fff;border:1px solid #dfe1e5;border-radius:4px"></div>
<div class="t" style="left:2148px;width:400px;text-align:center;top:294.0px;font-size:20px;line-height:30.0px;color:#2a2e35;">簇状图</div>
<div class="a" style="left:2422px;top:215px;width:122px;height:75px;background:#fff;border:1px solid #dfe1e5;border-radius:4px"></div>
<div class="t" style="left:2283px;width:400px;text-align:center;top:294.0px;font-size:20px;line-height:30.0px;color:#2a2e35;">堆积图</div>
<div class="a" style="left:2152px;top:337px;width:122px;height:75px;background:#fff;border:1.5px solid #1c837d;border-radius:4px"></div>
<div class="t" style="left:2013px;width:400px;text-align:center;top:416.5px;font-size:20px;line-height:30.0px;color:#2a2e35;">百分比堆积图</div>
<div class="a" style="left:2287px;top:337px;width:122px;height:75px;background:#fff;border:1px solid #dfe1e5;border-radius:4px"></div>
<div class="t" style="left:2148px;width:400px;text-align:center;top:416.5px;font-size:20px;line-height:30.0px;color:#2a2e35;">分组堆积图</div>
<div class="a" style="left:2422px;top:337px;width:122px;height:75px;background:#fff;border:1px solid #dfe1e5;border-radius:4px"></div>
<div class="t" style="left:2283px;width:400px;text-align:center;top:416.5px;font-size:20px;line-height:30.0px;color:#2a2e35;">子弹图</div>
<div class="a" style="left:2152px;top:459px;width:122px;height:75px;background:#fff;border:1px solid #dfe1e5;border-radius:4px"></div>
<div class="t" style="left:2013px;width:400px;text-align:center;top:539.0px;font-size:20px;line-height:30.0px;color:#2a2e35;">蝴蝶图</div>
<div class="a" style="left:2177.0px;top:233.0px;width:30.5px;height:8.5px;background:#4daaa6;"></div>
<div class="a" style="left:2177.0px;top:248.5px;width:71.0px;height:8.5px;background:#3ea6ec;"></div>
<div class="a" style="left:2177.0px;top:264.0px;width:52.0px;height:8.5px;background:#8ac86d;"></div>
<div class="a" style="left:2312.0px;top:232.0px;width:56.5px;height:8.0px;background:#3ea6ec;"></div>
<div class="a" style="left:2312.0px;top:240.0px;width:44.0px;height:8.0px;background:#8ac86d;"></div>
<div class="a" style="left:2312.0px;top:257.0px;width:71.0px;height:8.0px;background:#3ea6ec;"></div>
<div class="a" style="left:2312.0px;top:265.0px;width:36.0px;height:8.0px;background:#8ac86d;"></div>
<div class="a" style="left:2448.0px;top:233.0px;width:12.5px;height:8.5px;background:#6aab55;"></div>
<div class="a" style="left:2460.5px;top:233.0px;width:9.0px;height:8.5px;background:#86c56a;"></div>
<div class="a" style="left:2469.5px;top:233.0px;width:7.0px;height:8.5px;background:#c8e3e0;"></div>
<div class="a" style="left:2448.0px;top:248.5px;width:28.0px;height:8.5px;background:#5fa24a;"></div>
<div class="a" style="left:2476.0px;top:248.5px;width:25.0px;height:8.5px;background:#86c56a;"></div>
<div class="a" style="left:2501.0px;top:248.5px;width:17.0px;height:8.5px;background:#c8e3e0;"></div>
<div class="a" style="left:2448.0px;top:264.0px;width:24.0px;height:8.5px;background:#5fa24a;"></div>
<div class="a" style="left:2472.0px;top:264.0px;width:15.5px;height:8.5px;background:#86c56a;"></div>
<div class="a" style="left:2487.5px;top:264.0px;width:10.0px;height:8.5px;background:#c8e3e0;"></div>
<div class="a" style="left:2177.0px;top:355.0px;width:23.0px;height:8.5px;background:#5fa24a;"></div>
<div class="a" style="left:2200.0px;top:355.0px;width:35.0px;height:8.5px;background:#86c56a;"></div>
<div class="a" style="left:2235.0px;top:355.0px;width:13.0px;height:8.5px;background:#c8e3e0;"></div>
<div class="a" style="left:2177.0px;top:370.0px;width:28.0px;height:8.5px;background:#5fa24a;"></div>
<div class="a" style="left:2205.0px;top:370.0px;width:25.0px;height:8.5px;background:#86c56a;"></div>
<div class="a" style="left:2230.0px;top:370.0px;width:18.0px;height:8.5px;background:#c8e3e0;"></div>
<div class="a" style="left:2177.0px;top:385.0px;width:23.0px;height:8.5px;background:#5fa24a;"></div>
<div class="a" style="left:2200.0px;top:385.0px;width:23.5px;height:8.5px;background:#86c56a;"></div>
<div class="a" style="left:2223.5px;top:385.0px;width:24.5px;height:8.5px;background:#c8e3e0;"></div>
<div class="a" style="left:2313.0px;top:356.5px;width:17.0px;height:7.0px;background:#9fd2d0;"></div>
<div class="a" style="left:2330.0px;top:356.5px;width:12.0px;height:7.0px;background:#c8e3e0;"></div>
<div class="a" style="left:2313.0px;top:364.5px;width:20.0px;height:7.0px;background:#5fa24a;"></div>
<div class="a" style="left:2333.0px;top:364.5px;width:17.0px;height:7.0px;background:#86c56a;"></div>
<div class="a" style="left:2313.0px;top:379.0px;width:28.0px;height:7.0px;background:#9fd2d0;"></div>
<div class="a" style="left:2341.0px;top:379.0px;width:41.0px;height:7.0px;background:#c8e3e0;"></div>
<div class="a" style="left:2313.0px;top:387.0px;width:33.0px;height:7.0px;background:#5fa24a;"></div>
<div class="a" style="left:2346.0px;top:387.0px;width:23.0px;height:7.0px;background:#86c56a;"></div>
<div class="a" style="left:2448.0px;top:357.0px;width:30.5px;height:8.5px;background:#4daaa6;"></div>
<div class="a" style="left:2448.0px;top:372.0px;width:71.0px;height:8.5px;background:#3ea6ec;"></div>
<div class="a" style="left:2448.0px;top:387.5px;width:52.0px;height:8.5px;background:#8ac86d;"></div>
<div class="a" style="left:2468.0px;top:353.0px;width:2.0px;height:14.0px;background:#e07050;"></div>
<div class="a" style="left:2508.0px;top:368.0px;width:2.0px;height:14.0px;background:#e07050;"></div>
<div class="a" style="left:2490.0px;top:383.0px;width:2.0px;height:14.0px;background:#e07050;"></div>
<div class="a" style="left:2177.0px;top:478.0px;width:33.5px;height:8.0px;background:#6aab55;"></div>
<div class="a" style="left:2215.0px;top:478.0px;width:33.5px;height:8.0px;background:#48a8e8;"></div>
<div class="a" style="left:2185.0px;top:493.0px;width:25.5px;height:8.0px;background:#6aab55;"></div>
<div class="a" style="left:2215.0px;top:493.0px;width:25.0px;height:8.0px;background:#48a8e8;"></div>
<div class="a" style="left:2191.0px;top:508.0px;width:19.0px;height:8.0px;background:#6aab55;"></div>
<div class="a" style="left:2215.0px;top:508.0px;width:18.5px;height:8.0px;background:#48a8e8;"></div>
<div class="a" style="left:2135px;top:581px;width:425px;height:1px;background:#e4e6ea;"></div>
<div class="t" style="left:2168px;top:598.5px;font-size:20px;line-height:30.0px;color:#1c837d;">图表属性</div>
<div class="t" style="left:2320px;top:599.0px;font-size:20px;line-height:30.0px;color:#2a2e35;">高级设置</div>
<div class="a" style="left:2149px;top:636px;width:119px;height:5px;background:#1c837d;"></div>
<div class="a" style="left:2552px;top:641px;width:8px;height:489px;background:#a3b0bf;border-radius:4px"></div>
<svg style="left:2156px;top:665px" width="10" height="17" viewBox="0 0 10 17"><path d="M1.5 1.5 L8.5 8.5 L1.5 15.5" fill="none" stroke="#1f2329" stroke-width="1.6"/></svg>
<div class="t" style="left:2179px;top:660.5px;font-size:20px;line-height:30.0px;color:#2a2e35;">主题/颜色</div>
<div class="a" style="left:2149px;top:706px;width:388px;height:240px;background:#eff1f4;border-radius:6px"></div>
<div class="a" style="left:2135px;top:958px;width:417px;height:1px;background:#e4e6ea;"></div>
<div class="a" style="left:2135px;top:1026px;width:417px;height:1px;background:#e4e6ea;"></div>
<div class="a" style="left:2135px;top:1094px;width:417px;height:1px;background:#e4e6ea;"></div>
<div class="a" style="left:2135px;top:1161px;width:417px;height:1px;background:#e4e6ea;"></div>
<div class="a" style="left:2135px;top:1229px;width:417px;height:1px;background:#e4e6ea;"></div>
<svg style="left:2158px;top:986px" width="8" height="12" viewBox="0 0 8 12"><path d="M1.5 1.5 L6 6 L1.5 10.5" fill="none" stroke="#1f2329" stroke-width="1.5"/></svg>
<svg style="left:2158px;top:1054px" width="8" height="12" viewBox="0 0 8 12"><path d="M1.5 1.5 L6 6 L1.5 10.5" fill="none" stroke="#1f2329" stroke-width="1.5"/></svg>
<svg style="left:2158px;top:1122px" width="8" height="12" viewBox="0 0 8 12"><path d="M1.5 1.5 L6 6 L1.5 10.5" fill="none" stroke="#1f2329" stroke-width="1.5"/></svg>
<svg style="left:2158px;top:1189px" width="8" height="12" viewBox="0 0 8 12"><path d="M1.5 1.5 L6 6 L1.5 10.5" fill="none" stroke="#1f2329" stroke-width="1.5"/></svg>
<div class="a" style="left:2492px;top:1096px;width:53px;height:163px;border-radius:26.5px;background:#fff;box-shadow:0 1px 6px rgba(0,0,0,0.08)"></div>
<div class="a" style="left:2524px;top:1130px;width:3px;height:3px;background:#22b3ab;border-radius:50%"></div>
<div class="a" style="left:2524px;top:1137px;width:3px;height:3px;background:#22b3ab;border-radius:50%"></div>
<div class="a" style="left:2524px;top:1159px;width:2.2px;height:13px;background:#22b3ab;"></div>
<svg style="left:2520px;top:1192px" width="10" height="15" viewBox="0 0 10 15"><path d="M1 1.2 H5.5 V13.5 H1.5" fill="none" stroke="#22b3ab" stroke-width="2"/></svg>
<div class="t" style="left:2508.5px;top:1215.5px;font-size:20px;line-height:30.0px;color:#22b3ab;">手</div>
<div class="a" style="left:2512px;top:1047px;width:26px;height:26px;border-radius:50%;background:#c3c6cb"></div>
<svg style="left:2156px;top:1255px" width="10" height="17" viewBox="0 0 10 17"><path d="M1.5 1.5 L8.5 8.5 L1.5 15.5" fill="none" stroke="#1f2329" stroke-width="1.6"/></svg>
<div class="t" style="left:2179px;top:1250.0px;font-size:20px;line-height:30.0px;color:#2a2e35;">图形显示</div>
<div class="a" style="left:2178px;top:723px;width:344px;height:53px;background:#f2f3f6;border:1.5px solid #1c837d;border-radius:4px"></div>
<div class="a" style="left:2198px;top:739px;width:1.2px;height:22px;background:#2b2f36;"></div>
<div class="t" style="left:2198px;top:736.0px;font-size:20px;line-height:30.0px;color:#969ba4;">翠绿主题</div>
<svg style="left:2484px;top:741px" width="20" height="20" viewBox="0 0 20 20"><circle cx="8" cy="8" r="6.5" fill="none" stroke="#1f2329" stroke-width="1.8"/><path d="M12.8 12.8 L18.5 18.5" stroke="#1f2329" stroke-width="2"/></svg>
<div class="a" style="left:2178px;top:783px;width:344px;height:435px;background:#fff;border-radius:4px;box-shadow:0 3px 10px rgba(0,0,0,0.10);overflow:hidden">
</div>
<div class="a" style="left:2185px;top:1160px;width:331px;height:54px;background:#eef3f3;border-radius:3px"></div>
<div class="t" style="left:2205px;top:802.0px;font-size:20px;line-height:30.0px;color:#2b2f36;letter-spacing:0.4px">商务红T036&038</div>
<div class="a" style="left:2412.0px;top:804.0px;width:11.5px;height:11.5px;background:#f4a08c"></div>
<div class="a" style="left:2423.4px;top:804.0px;width:11.5px;height:11.5px;background:#d5432a"></div>
<div class="a" style="left:2434.8px;top:804.0px;width:11.5px;height:11.5px;background:#820d0d"></div>
<div class="a" style="left:2446.2px;top:804.0px;width:11.5px;height:11.5px;background:#f9d3d3"></div>
<div class="a" style="left:2457.6px;top:804.0px;width:11.5px;height:11.5px;background:#b09c9c"></div>
<div class="a" style="left:2412.0px;top:815.5px;width:11.5px;height:11.5px;background:#d6bd8a"></div>
<div class="a" style="left:2423.4px;top:815.5px;width:11.5px;height:11.5px;background:#c8900f"></div>
<div class="a" style="left:2434.8px;top:815.5px;width:11.5px;height:11.5px;background:#f1eeb3"></div>
<div class="a" style="left:2446.2px;top:815.5px;width:11.5px;height:11.5px;background:#e8d04a"></div>
<div class="a" style="left:2457.6px;top:815.5px;width:11.5px;height:11.5px;background:#dedede"></div>
<div class="t" style="left:2205px;top:855.0px;font-size:20px;line-height:30.0px;color:#2b2f36;">商务蓝T037</div>
<div class="a" style="left:2412.0px;top:857.0px;width:11.5px;height:11.5px;background:#b3b6fb"></div>
<div class="a" style="left:2423.4px;top:857.0px;width:11.5px;height:11.5px;background:#5b9cf8"></div>
<div class="a" style="left:2434.8px;top:857.0px;width:11.5px;height:11.5px;background:#1272da"></div>
<div class="a" style="left:2446.2px;top:857.0px;width:11.5px;height:11.5px;background:#bde0fa"></div>
<div class="a" style="left:2457.6px;top:857.0px;width:11.5px;height:11.5px;background:#49d2f6"></div>
<div class="a" style="left:2412.0px;top:868.5px;width:11.5px;height:11.5px;background:#90ecc8"></div>
<div class="a" style="left:2423.4px;top:868.5px;width:11.5px;height:11.5px;background:#22c2a0"></div>
<div class="a" style="left:2434.8px;top:868.5px;width:11.5px;height:11.5px;background:#c7f6a2"></div>
<div class="a" style="left:2446.2px;top:868.5px;width:11.5px;height:11.5px;background:#a8d93e"></div>
<div class="a" style="left:2457.6px;top:868.5px;width:11.5px;height:11.5px;background:#d5b3f3"></div>
<div class="t" style="left:2205px;top:908.0px;font-size:20px;line-height:30.0px;color:#2b2f36;">精品应用主题-4</div>
<div class="a" style="left:2412.0px;top:910.0px;width:11.5px;height:11.5px;background:#f2a200"></div>
<div class="a" style="left:2423.4px;top:910.0px;width:11.5px;height:11.5px;background:#4a2a29"></div>
<div class="a" style="left:2434.8px;top:910.0px;width:11.5px;height:11.5px;background:#3a9f86"></div>
<div class="a" style="left:2446.2px;top:910.0px;width:11.5px;height:11.5px;background:#3f9fe0"></div>
<div class="a" style="left:2457.6px;top:910.0px;width:11.5px;height:11.5px;background:#ec5054"></div>
<div class="a" style="left:2412.0px;top:921.5px;width:11.5px;height:11.5px;background:#fadb9e"></div>
<div class="a" style="left:2423.4px;top:921.5px;width:11.5px;height:11.5px;background:#858585"></div>
<div class="a" style="left:2434.8px;top:921.5px;width:11.5px;height:11.5px;background:#333333"></div>
<div class="t" style="left:2205px;top:959.5px;font-size:20px;line-height:30.0px;color:#2b2f36;">商务蓝T021</div>
<div class="a" style="left:2412.0px;top:962.0px;width:11.5px;height:11.5px;background:#3e4798"></div>
<div class="a" style="left:2423.4px;top:962.0px;width:11.5px;height:11.5px;background:#e8ae7f"></div>
<div class="a" style="left:2434.8px;top:962.0px;width:11.5px;height:11.5px;background:#a9aaf6"></div>
<div class="a" style="left:2446.2px;top:962.0px;width:11.5px;height:11.5px;background:#b0d7de"></div>
<div class="a" style="left:2457.6px;top:962.0px;width:11.5px;height:11.5px;background:#c6aaa2"></div>
<div class="a" style="left:2412.0px;top:973.5px;width:11.5px;height:11.5px;background:#d9defc"></div>
<div class="a" style="left:2423.4px;top:973.5px;width:11.5px;height:11.5px;background:#fd8e3a"></div>
<div class="a" style="left:2434.8px;top:973.5px;width:11.5px;height:11.5px;background:#dcfadb"></div>
<div class="a" style="left:2446.2px;top:973.5px;width:11.5px;height:11.5px;background:#7fc9cc"></div>
<div class="a" style="left:2457.6px;top:973.5px;width:11.5px;height:11.5px;background:#8d7ed0"></div>
<div class="t" style="left:2205px;top:1013.0px;font-size:20px;line-height:30.0px;color:#2b2f36;letter-spacing:0.85px">test-barry</div>
<div class="a" style="left:2434.8px;top:1020.0px;width:11.5px;height:12px;background:#e5142d"></div>
<div class="a" style="left:2446.2px;top:1020.0px;width:11.5px;height:12px;background:#fbe22c"></div>
<div class="a" style="left:2457.6px;top:1020.0px;width:11.5px;height:12px;background:#3b94ba"></div>
<div class="t" style="left:2205px;top:1066.0px;font-size:20px;line-height:30.0px;color:#2b2f36;">舍得酒业配色</div>
<div class="a" style="left:2412.0px;top:1068.0px;width:11.5px;height:11.5px;background:#a07c50"></div>
<div class="a" style="left:2423.4px;top:1068.0px;width:11.5px;height:11.5px;background:#8c7c70"></div>
<div class="a" style="left:2434.8px;top:1068.0px;width:11.5px;height:11.5px;background:#22586b"></div>
<div class="a" style="left:2446.2px;top:1068.0px;width:11.5px;height:11.5px;background:#6a202a"></div>
<div class="a" style="left:2457.6px;top:1068.0px;width:11.5px;height:11.5px;background:#7a5c44"></div>
<div class="a" style="left:2412.0px;top:1079.5px;width:11.5px;height:11.5px;background:#463426"></div>
<div class="a" style="left:2423.4px;top:1079.5px;width:11.5px;height:11.5px;background:#92c6b8"></div>
<div class="a" style="left:2434.8px;top:1079.5px;width:11.5px;height:11.5px;background:#23466b"></div>
<div class="a" style="left:2446.2px;top:1079.5px;width:11.5px;height:11.5px;background:#e4dbcf"></div>
<div class="t" style="left:2205px;top:1118.5px;font-size:20px;line-height:30.0px;color:#2b2f36;">简约主题</div>
<div class="a" style="left:2412.0px;top:1120.0px;width:11.5px;height:11.5px;background:#2d86f7"></div>
<div class="a" style="left:2423.4px;top:1120.0px;width:11.5px;height:11.5px;background:#14c2c1"></div>
<div class="a" style="left:2434.8px;top:1120.0px;width:11.5px;height:11.5px;background:#f9a757"></div>
<div class="a" style="left:2446.2px;top:1120.0px;width:11.5px;height:11.5px;background:#6e5ee6"></div>
<div class="a" style="left:2457.6px;top:1120.0px;width:11.5px;height:11.5px;background:#47a7f3"></div>
<div class="a" style="left:2412.0px;top:1131.5px;width:11.5px;height:11.5px;background:#fb9c9c"></div>
<div class="a" style="left:2423.4px;top:1131.5px;width:11.5px;height:11.5px;background:#b97ee2"></div>
<div class="a" style="left:2434.8px;top:1131.5px;width:11.5px;height:11.5px;background:#7fc8f0"></div>
<div class="a" style="left:2446.2px;top:1131.5px;width:11.5px;height:11.5px;background:#4aa0b8"></div>
<div class="a" style="left:2457.6px;top:1131.5px;width:11.5px;height:11.5px;background:#a1aae2"></div>
<div class="t" style="left:2205px;top:1172.0px;font-size:20px;line-height:30.0px;color:#2b2f36;font-weight:700;">翠绿主题</div>
<div class="a" style="left:2412.0px;top:1174.0px;width:11.5px;height:11.5px;background:#96cf7e"></div>
<div class="a" style="left:2423.4px;top:1174.0px;width:11.5px;height:11.5px;background:#57a4a0"></div>
<div class="a" style="left:2434.8px;top:1174.0px;width:11.5px;height:11.5px;background:#ffd85a"></div>
<div class="a" style="left:2446.2px;top:1174.0px;width:11.5px;height:11.5px;background:#cfe9ee"></div>
<div class="a" style="left:2457.6px;top:1174.0px;width:11.5px;height:11.5px;background:#4a8ee8"></div>
<div class="a" style="left:2412.0px;top:1185.5px;width:11.5px;height:11.5px;background:#f97b7b"></div>
<div class="a" style="left:2423.4px;top:1185.5px;width:11.5px;height:11.5px;background:#e2e4ea"></div>
<div class="a" style="left:2434.8px;top:1185.5px;width:11.5px;height:11.5px;background:#6e9fe0"></div>
<div class="a" style="left:2446.2px;top:1185.5px;width:11.5px;height:11.5px;background:#96b6de"></div>
<div class="a" style="left:2457.6px;top:1185.5px;width:11.5px;height:11.5px;background:#6b8ea4"></div>
<div class="a" style="left:2506px;top:1169px;width:9.5px;height:32px;background:#9ba8b6;border-radius:5px"></div>
<div class="a" style="left:2157px;top:703px;width:378px;height:511px;border:3px solid #e31b23"></div>
<div class="a" style="left:0px;top:1291px;width:2560px;height:2px;background:#1f1f1f;"></div>
<div class="a" style="left:72px;top:1291px;width:432px;height:2px;background:#bdbdbd;"></div>
<div class="a" style="left:806px;top:1291px;width:73px;height:2px;background:#555555;"></div>
</body></html>
